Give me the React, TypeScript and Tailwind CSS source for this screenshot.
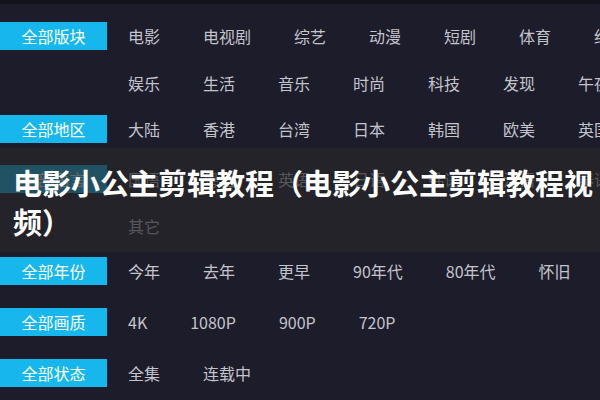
import React from "react";

type Row = { label: string; items: string[]; mb: string };

const rows: Row[] = [
  { label: "全部版块", items: ["电影", "电视剧", "综艺", "动漫", "短剧", "体育", "纪录片", "娱乐", "生活", "音乐", "时尚", "科技", "发现", "午夜"], mb: "mb-[18px]" },
  { label: "全部地区", items: ["大陆", "香港", "台湾", "日本", "韩国", "欧美", "英国"], mb: "mb-[22px]" },
  { label: "全部语言", items: ["国语", "粤语", "英语", "日语", "韩语", "法语", "泰语", "其它"], mb: "mb-[17px]" },
  { label: "全部年份", items: ["今年", "去年", "更早", "90年代", "80年代", "怀旧"], mb: "mb-[23px]" },
  { label: "全部画质", items: ["4K", "1080P", "900P", "720P"], mb: "mb-[23px]" },
  { label: "全部状态", items: ["全集", "连载中"], mb: "mb-0" },
];

export default function App() {
  return (
    <div className="relative w-[600px] h-[400px] overflow-hidden bg-[#1c1c2a] font-['Noto_Sans_CJK_SC','Noto_Sans',sans-serif]">
      <div className="h-[4px] bg-[#13131d]" />
      <div className="w-[710px] pt-[18px]">
        {rows.map((r) => (
          <div key={r.label} className={`flex items-start ${r.mb}`}>
            <div className="w-[107px] h-[28px] shrink-0 bg-[#17b7ee] text-white text-[16px] leading-[28px] text-center">
              {r.label}
            </div>
            <div className="ml-[21px] flex flex-wrap gap-y-[19px] flex-1">
              {r.items.map((it) => (
                <span key={it} className="mr-[43px] text-[16px] leading-[28px] text-[#c4c4cc] whitespace-nowrap">
                  {it}
                </span>
              ))}
            </div>
          </div>
        ))}
      </div>
      <div className="absolute left-0 right-0 top-[148px] h-[104px] bg-[rgba(38,38,42,0.7)] pl-[13px] pr-[4px] pt-[15px]">
        <p className="text-white font-bold text-[29px] leading-[39px]">
          电影小公主剪辑教程（电影小公主剪辑教程视频）
        </p>
      </div>
    </div>
  );
}
